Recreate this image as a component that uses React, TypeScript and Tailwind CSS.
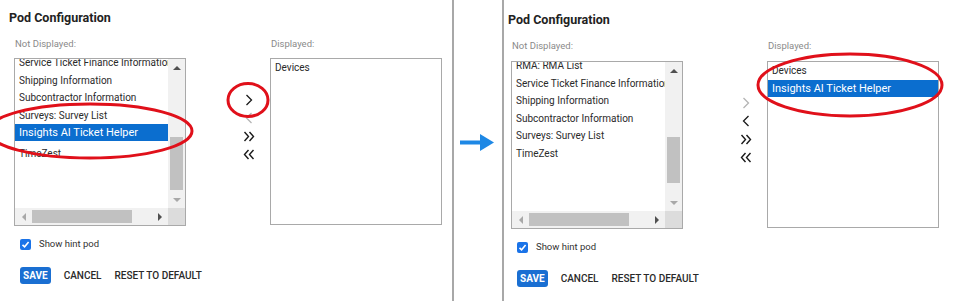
type Item = { label: string; selected?: boolean }

const Tri = ({ dir, dark }: { dir: 'up' | 'down' | 'left' | 'right'; dark: boolean }) => {
    const pts = {
        up: '0,5 4,1 8,5',
        down: '0,1 4,5 8,1',
        left: '5,0 1,4 5,8',
        right: '1,0 5,4 1,8',
    }[dir]
    const box = dir === 'up' || dir === 'down' ? '0 0 8 6' : '0 0 6 8'
    const w = dir === 'up' || dir === 'down' ? 8 : 6
    const h = dir === 'up' || dir === 'down' ? 6 : 8
    return (
        <svg width={w} height={h} viewBox={box}>
            <polygon points={pts} fill={dark ? '#505050' : '#a8a8a8'} />
        </svg>
    )
}

const Row = ({ item }: { item: Item }) =>
    item.selected ? (
        <div className="h-[17px] leading-[17px] bg-[#0b6ecf] text-white text-[11px] pl-[4px] whitespace-nowrap">
            {item.label}
        </div>
    ) : (
        <div className="h-[17.5px] leading-[17.5px] text-[10px] text-[#2a2a2a] pl-[4px] whitespace-nowrap">
            {item.label}
        </div>
    )

const ScrollList = ({ items, vTop, vHeight }: { items: Item[]; vTop: number; vHeight: number }) => (
    <div className="w-[172px] h-[168px] border border-[#a9a9a9] bg-white flex flex-col">
        <div className="flex flex-1 min-h-0">
            <div className="flex-1 overflow-hidden">
                <div className="-mt-[5px] w-[190px]">
                    {items.map((it) => (
                        <div key={it.label} className={it.selected ? 'mb-[4px]' : ''}>
                            <Row item={it} />
                        </div>
                    ))}
                </div>
            </div>
            <div className="w-[17px] bg-[#f1f1f1] flex flex-col">
                <div className="h-[17px] flex items-center justify-center">
                    <Tri dir="up" dark />
                </div>
                <div className="flex-1 relative">
                    <div
                        className="absolute left-[2px] right-[2px] bg-[#c1c1c1]"
                        style={{ top: vTop, height: vHeight }}
                    />
                </div>
                <div className="h-[17px] flex items-center justify-center">
                    <Tri dir="down" dark={false} />
                </div>
            </div>
        </div>
        <div className="h-[17px] flex">
            <div className="flex-1 bg-[#f1f1f1] flex items-center">
                <div className="w-[17px] flex justify-center">
                    <Tri dir="left" dark={false} />
                </div>
                <div className="w-[100px] h-[13px] bg-[#c1c1c1]" />
                <div className="flex-1" />
                <div className="w-[17px] flex justify-center">
                    <Tri dir="right" dark />
                </div>
            </div>
            <div className="w-[17px] bg-[#dcdcdc]" />
        </div>
    </div>
)

const Chevron = ({ left, color }: { left?: boolean; color: string }) => (
    <svg width="8" height="12" viewBox="0 0 8 12">
        <polyline
            points={left ? '6.5,1 1.5,6 6.5,11' : '1.5,1 6.5,6 1.5,11'}
            fill="none"
            stroke={color}
            strokeWidth="1.3"
        />
    </svg>
)

const Double = ({ left }: { left?: boolean }) => (
    <svg width="12" height="11" viewBox="0 0 12 11">
        <polyline
            points={left ? '5.5,1 1.5,5.5 5.5,10' : '1.5,1 5.5,5.5 1.5,10'}
            fill="none"
            stroke="#1a1a1a"
            strokeWidth="1.4"
        />
        <polyline
            points={left ? '10.5,1 6.5,5.5 10.5,10' : '6.5,1 10.5,5.5 6.5,10'}
            fill="none"
            stroke="#1a1a1a"
            strokeWidth="1.4"
        />
    </svg>
)

type PanelProps = {
    className: string
    bodyClass: string
    notDisplayed: Item[]
    displayed: Item[]
    rightActive: boolean
    vTop: number
    vHeight: number
    boxGap: string
}

const Panel = ({ className, bodyClass, notDisplayed, displayed, rightActive, vTop, vHeight, boxGap }: PanelProps) => (
    <div className={className}>
        <div className="text-[12.5px] leading-[16px] font-bold text-[#222]">Pod Configuration</div>
        <div className={bodyClass}>
            <div className="flex mt-[12px]">
                <div className="flex flex-col">
                    <div className={`text-[9.5px] leading-[12px] text-[#8a8a8a] pl-[1px] ${boxGap}`}>Not Displayed:</div>
                    <ScrollList items={notDisplayed} vTop={vTop} vHeight={vHeight} />
                </div>
                <div className="w-[84px] flex flex-col">
                    <div className={`h-[12px] ${boxGap}`} />
                    <div className="ml-auto mr-[14px] w-[14px] pt-[33px] flex flex-col items-center">
                        <div className="h-[18px] flex items-center">
                            <Chevron color={rightActive ? '#1a1a1a' : '#b4b4b4'} />
                        </div>
                        <div className="h-[18px] flex items-center">
                            <Chevron left color={rightActive ? '#b4b4b4' : '#1a1a1a'} />
                        </div>
                        <div className="h-[18px] flex items-center">
                            <Double />
                        </div>
                        <div className="h-[18px] flex items-center">
                            <Double left />
                        </div>
                    </div>
                </div>
                <div className="flex flex-col">
                    <div className={`text-[9.5px] leading-[12px] text-[#8a8a8a] pl-[1px] ${boxGap}`}>Displayed:</div>
                    <div className="w-[172px] h-[167px] border border-[#a9a9a9] bg-white overflow-hidden">
                        {displayed.map((it) => (
                            <Row key={it.label} item={it} />
                        ))}
                    </div>
                </div>
            </div>
            <div className="flex items-center gap-[8px] ml-[6px] mt-[11px]">
                <div className="w-[11px] h-[11px] rounded-[2px] bg-[#1a73e8] flex items-center justify-center">
                    <svg width="9" height="9" viewBox="0 0 9 9">
                        <polyline points="1.5,4.8 3.6,6.8 7.6,2" fill="none" stroke="#fff" strokeWidth="1.6" />
                    </svg>
                </div>
                <span className="text-[9.5px] text-[#333]">Show hint pod</span>
            </div>
            <div className="flex items-center ml-[6px] mt-[16px] text-[10px] font-medium text-[#2a2a2a]">
                <div className="h-[17px] px-[3px] rounded-[3px] bg-[#1a6fd2] text-white font-bold flex items-center">SAVE</div>
                <span className="ml-[13px]">CANCEL</span>
                <span className="ml-[13px]">RESET TO DEFAULT</span>
            </div>
        </div>
    </div>
)

const base: Item[] = [
    { label: 'Service Ticket Finance Information' },
    { label: 'Shipping Information' },
    { label: 'Subcontractor Information' },
    { label: 'Surveys: Survey List' },
]

export default function App() {
    return (
        <div className="relative flex w-[960px] h-[301px] bg-white overflow-hidden font-[Roboto,'Liberation_Sans',sans-serif]">
            <Panel
                className="w-[452px] pt-[10px] pl-[9px]"
                bodyClass="ml-[5px]"
                notDisplayed={[...base, { label: 'Insights AI Ticket Helper', selected: true }, { label: 'TimeZest' }]}
                displayed={[{ label: 'Devices' }]}
                rightActive
                vTop={61}
                vHeight={53}
                boxGap="mb-[8px]"
            />
            <div className="w-[2px] bg-[#a8a8a8]" />
            <div className="w-[48px] pt-[134px] pl-[6px]">
                <svg width="34" height="17" viewBox="0 0 34 17">
                    <rect x="0" y="6.5" width="21" height="4" fill="#1e88e5" />
                    <polygon points="20,0 34,8.5 20,17" fill="#1e88e5" />
                </svg>
            </div>
            <div className="w-[2px] bg-[#a8a8a8]" />
            <Panel
                className="flex-1 pt-[12px] pl-[4px]"
                bodyClass="ml-[3px]"
                notDisplayed={[{ label: 'RMA: RMA List' }, ...base, { label: 'TimeZest' }]}
                displayed={[{ label: 'Devices' }, { label: 'Insights AI Ticket Helper', selected: true }]}
                rightActive={false}
                vTop={58}
                vHeight={46}
                boxGap="mb-[9px]"
            />
            <svg className="absolute inset-0 pointer-events-none" width="960" height="301">
                <ellipse cx="90" cy="131" rx="102" ry="27" fill="none" stroke="#e0101a" strokeWidth="3" />
                <ellipse cx="248" cy="100" rx="20" ry="16.5" fill="none" stroke="#e0101a" strokeWidth="3" />
                <ellipse cx="850" cy="85" rx="92" ry="31" fill="none" stroke="#e0101a" strokeWidth="3" />
            </svg>
        </div>
    )
}
